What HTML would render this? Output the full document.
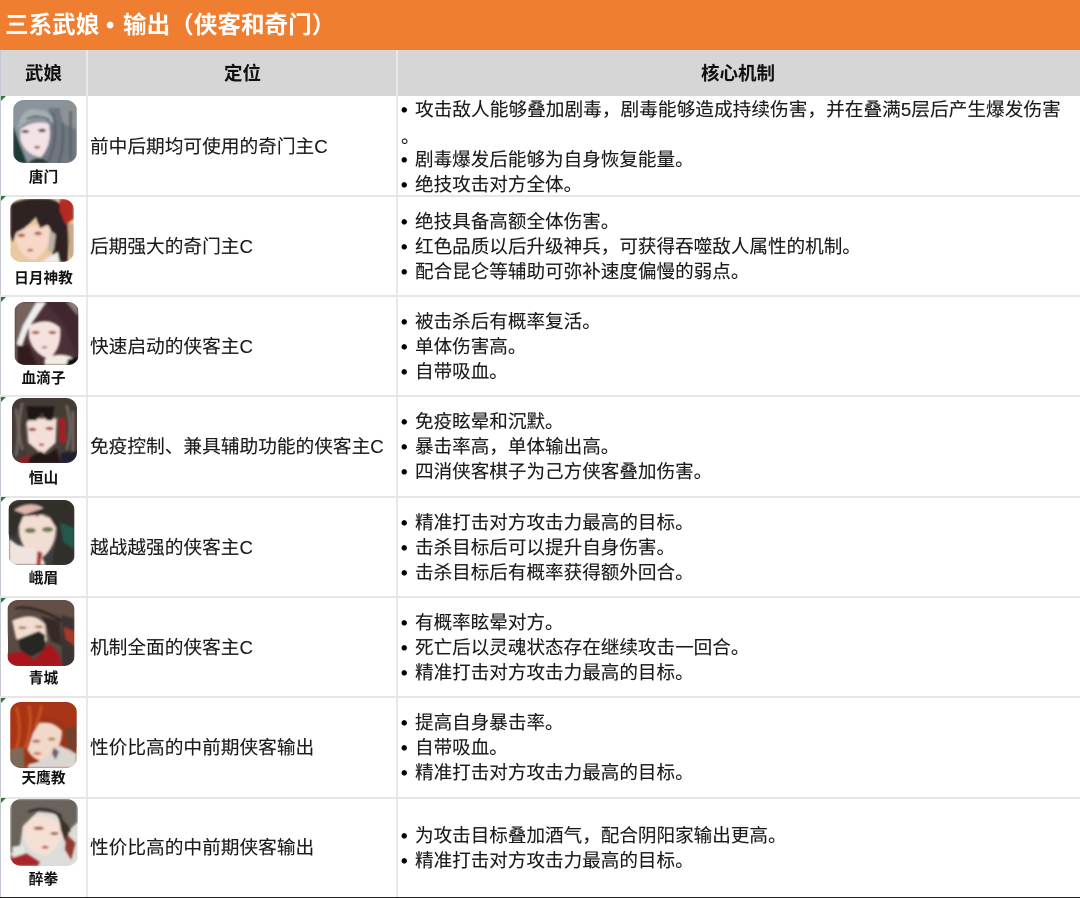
<!DOCTYPE html>
<html lang="zh"><head><meta charset="utf-8"><style>
html,body{margin:0;padding:0;background:#fff}
body{width:1080px;height:898px;position:relative;overflow:hidden;font-family:"Liberation Sans","Noto Sans CJK SC",sans-serif;color:#222}
.a{position:absolute}
.t{position:absolute;white-space:nowrap;font-size:18.7px;line-height:25px;color:#1a1a1a;text-shadow:0 0 .5px rgba(0,0,0,.45)}
.r{font-size:18.58px}
.t i{display:inline-block;width:14px;font-style:normal;font-weight:700;color:#000}
.n{position:absolute;left:0;width:87px;text-align:center;font-size:14.7px;font-weight:700;line-height:18px;color:#111;white-space:nowrap}
.h{position:absolute;top:61px;text-align:center;font-size:18.5px;font-weight:700;line-height:26px;color:#111}
.l{position:absolute;left:0;width:1080px;height:2px;background:#e6e6e6}
.v{position:absolute;top:50px;width:2px;height:847px;background:#e8e8e8}
.c{position:absolute;left:1px;width:0;height:0;border-top:5px solid #2d7d32;border-right:5px solid transparent}
svg{position:absolute;overflow:hidden;border-radius:11px}
svg path.s{fill:none;stroke-linecap:round}
.ti{position:absolute;top:10px;font-size:23.6px;line-height:32px;font-weight:700;color:#fff;white-space:nowrap}
</style></head><body>
<div class="a" style="left:0;top:0;width:1080px;height:50px;background:#ef7e30"></div>
<div class="ti" style="left:5px">三系武娘</div>
<div class="ti" style="left:106px">•</div>
<div class="ti" style="left:123px">输出（侠客和奇门）</div>
<div class="a" style="left:0;top:50px;width:1080px;height:46px;background:#d6d6d6"></div>
<div class="v" style="left:86px"></div>
<div class="v" style="left:396px"></div>
<div class="a" style="left:0;top:50px;width:1px;height:847px;background:#c4c9d4"></div>
<div class="h" style="left:0;width:87px">武娘</div>
<div class="h" style="left:88px;width:309px">定位</div>
<div class="h" style="left:398px;width:680px">核心机制</div>
<div class="l" style="top:195px"></div><div class="l" style="top:295px"></div><div class="l" style="top:395px"></div><div class="l" style="top:496px"></div><div class="l" style="top:596px"></div><div class="l" style="top:696px"></div><div class="l" style="top:797px"></div>
<div class="a" style="left:0;top:897px;width:1080px;height:1px;background:#222"></div>
<div class="c" style="top:96px"></div><div class="c" style="top:196px"></div><div class="c" style="top:297px"></div><div class="c" style="top:397px"></div><div class="c" style="top:497px"></div><div class="c" style="top:598px"></div><div class="c" style="top:698px"></div><div class="c" style="top:798px"></div>

<svg style="left:13px;top:100px" width="64" height="63" viewBox="0 0 64 64"><defs><filter id="b" x="-10%" y="-10%" width="120%" height="120%"><feGaussianBlur stdDeviation="1"/></filter></defs><rect width="64" height="64" fill="#7d868e"/><g filter="url(#b)"><path d="M0 0H64V64H0z" fill="#8b949c"/><path d="M36 8H64V64H28z" fill="#6f7780"/><path d="M46 4L64 6V30L50 24z" fill="#8e9294"/><path d="M0 26L6 44 14 64H0z" fill="#1f3a34"/><path d="M7 30Q20 20 36 24 40 44 28 58 12 56 7 40z" fill="#f3e2e6"/><path d="M4 30Q8 6 24 10 40 10 42 26L38 22 22 17 10 24z" fill="#a6aeb4"/><path d="M14 19Q24 14 36 20" class="s" stroke="#62686e" stroke-width="2"/><path d="M40 14Q46 36 36 62M50 24Q52 44 46 64M58 12V60" class="s" stroke="#59626a" stroke-width="2.5"/><path d="M14 64Q26 54 36 64z" fill="#2a3331"/><ellipse cx="12" cy="32" rx="4" ry="1.6" fill="#54464e"/><ellipse cx="29" cy="31" rx="4" ry="1.8" fill="#54464e"/><ellipse cx="24" cy="48" rx="3" ry="1.4" fill="#a8324c"/></g></svg>

<svg style="left:10px;top:199px" width="64" height="63" viewBox="0 0 64 64"><rect width="64" height="64" fill="#eac8a0"/><g filter="url(#b)"><path d="M3 32Q24 24 40 28 42 52 24 62 8 60 3 32z" fill="#f5d8c8"/><path d="M0 36V6Q10-2 40 0 58 4 60 28L58 64H42L44 38 38 26 30 30 26 18 14 30 6 34 2 44z" fill="#2d2320"/><path d="M50 0H64V20L56 26 50 12z" fill="#b52a24"/><path d="M58 24L64 26V60L60 60z" fill="#c8a888"/><path d="M40 32L46 36 44 52 38 54z" fill="#b8b4a4"/><path d="M30 64L48 54 50 64z" fill="#eeeeee"/><ellipse cx="11" cy="37" rx="4" ry="1.8" fill="#bb5a44"/><ellipse cx="28" cy="35" rx="4" ry="1.8" fill="#bb5a44"/><ellipse cx="20" cy="52" rx="3" ry="1.3" fill="#b84a50"/></g></svg>

<svg style="left:14px;top:302px" width="65" height="63" viewBox="0 0 64 64"><rect width="64" height="64" fill="#4c3038"/><g filter="url(#b)"><path d="M14 24Q34 14 46 26 48 48 34 58 18 52 14 36z" fill="#f5e2df"/><path d="M0 0H30L18 12 6 36 4 64H0z" fill="#74645c"/><path d="M22 0H32L14 26 6 48 2 42 8 24z" fill="#efeded"/><path d="M30 0H56L64 8V56L56 40 50 22 38 8z" fill="#40262f"/><path d="M52 0H64V14z" fill="#8a7c78"/><path d="M2 44L14 44 22 64H2z" fill="#331b1e"/><path d="M30 58Q44 50 58 56V64H30z" fill="#f0ece4"/><path d="M54 58L64 56V64H52z" fill="#100a0a"/><ellipse cx="21" cy="31" rx="4" ry="1.6" fill="#a04a3c"/><ellipse cx="38" cy="31" rx="4" ry="1.6" fill="#a04a3c"/><ellipse cx="30" cy="46" rx="3" ry="1.2" fill="#a86a70"/></g></svg>

<svg style="left:12px;top:398px" width="65" height="65" viewBox="0 0 64 64"><rect width="64" height="64" fill="#4a3f3a"/><g filter="url(#b)"><path d="M14 20H44L43 44 30 56 16 44z" fill="#f4dfd8"/><path d="M0 0H64V64H48L50 28 44 18H18L12 30 14 56 0 64z" fill="#453a34"/><path d="M4 12Q8 34 4 56M10 6Q4 30 10 50M54 8Q60 30 54 50M60 14V52" class="s" stroke="#716660" stroke-width="2.5"/><path d="M14 8L42 8 40 22H34L30 14 24 22H16z" fill="#1c1413"/><path d="M46 20H52L53 44 47 44z" fill="#a81e22"/><path d="M10 64L28 52 34 56 44 50 48 64z" fill="#241818"/><path d="M6 60L18 56 16 64H6z" fill="#8f1e20"/><path d="M48 54L64 52V64H48z" fill="#1c2230"/><ellipse cx="20" cy="31" rx="4" ry="1.6" fill="#9a4238"/><ellipse cx="37" cy="30" rx="4" ry="1.6" fill="#9a4238"/><ellipse cx="29" cy="46" rx="2.6" ry="1.3" fill="#b03040"/></g></svg>

<svg style="left:8px;top:500px" width="67" height="65" viewBox="0 0 64 64"><rect width="64" height="64" fill="#3f3e3a"/><g filter="url(#b)"><path d="M8 14L10 4 0 8V30z" fill="#8e8c86"/><path d="M10 18Q30 8 46 22 48 44 34 56 14 54 10 34z" fill="#f2ddd2"/><path d="M0 6Q20-4 58 0L64 8V64H42L48 30 38 14 14 16 6 36 0 34z" fill="#302d2a"/><path d="M5 10Q20 0 34 8L16 14z" fill="#e0b8ac"/><path d="M50 22L64 28V48L54 42z" fill="#245a4c"/><path d="M0 38L8 44 30 50 36 64H0z" fill="#efe4e0"/><path d="M28 50L33 52 31 64H27z" fill="#b03028"/><ellipse cx="21" cy="30" rx="5.5" ry="2.6" fill="#6e7a50"/><ellipse cx="38" cy="29" rx="5.5" ry="2.6" fill="#6e7a50"/><circle cx="28" cy="15" r="1.3" fill="#a0302a"/></g></svg>

<svg style="left:7px;top:600px" width="68" height="66" viewBox="0 0 64 64"><rect width="64" height="64" fill="#5a4a42"/><g filter="url(#b)"><path d="M4 20Q26 10 36 24L38 40 8 38z" fill="#f0ddd0"/><path d="M0 0H64V26L50 14 18 6 2 18 0 40z" fill="#635044"/><path d="M8 8Q24 4 52 20" class="s" stroke="#2e2723" stroke-width="2.5"/><path d="M10 38L30 30 36 34 36 48 20 56 12 48z" fill="#272524"/><path d="M0 52L14 50 26 58 40 42 50 54 52 64H0z" fill="#a8161e"/><path d="M32 16L50 20 52 44 42 40 36 24z" fill="#352b27"/><path d="M52 14L64 18V64H52z" fill="#3a3230"/><path d="M54 26L64 30V44L56 38z" fill="#a53a28"/><ellipse cx="14" cy="27" rx="4" ry="1.3" fill="#a07038"/><ellipse cx="30" cy="26" rx="4" ry="1.3" fill="#a07038"/></g></svg>

<svg style="left:10px;top:702px" width="67" height="66" viewBox="0 0 64 64"><rect width="64" height="64" fill="#9a3418"/><g filter="url(#b)"><path d="M18 24Q38 14 50 28 50 48 32 58 14 54 16 36z" fill="#f1d8c8"/><path d="M0 0H64V30L56 30 48 18 32 14 22 30 14 54 0 64z" fill="#a83412"/><path d="M6 6Q12 30 4 50M18 4Q22 24 14 44M30 4Q28 14 24 24" class="s" stroke="#c9521f" stroke-width="2.5"/><path d="M52 26L64 22V44L56 50z" fill="#74402c"/><path d="M0 46L12 44 14 64H0z" fill="#7b6a5a"/><path d="M18 60Q34 58 48 42L64 50V64H16z" fill="#dcd6d2"/><ellipse cx="40" cy="36" rx="3.5" ry="1.6" fill="#c08030"/><ellipse cx="25" cy="38" rx="4" ry="1.4" fill="#b45a3c"/><ellipse cx="26" cy="50" rx="4" ry="1.5" fill="#d8705c"/><path d="M42 44L47 48 44 56 40 50z" fill="#6a6070"/></g></svg>

<svg style="left:10px;top:799px" width="68" height="67" viewBox="0 0 64 64"><rect width="64" height="64" fill="#dcdcd8"/><g filter="url(#b)"><path d="M12 20Q34 10 50 26 48 48 34 54 16 52 12 34z" fill="#f5e0d6"/><path d="M0 0H64V22L56 30 46 14 26 12 12 26 8 50 0 52z" fill="#6a645c"/><path d="M18 12Q34 6 48 16M46 16L56 30" class="s" stroke="#2e2823" stroke-width="2.5"/><path d="M46 16L56 26 54 44 48 30z" fill="#3a3028"/><path d="M54 34L62 42 58 58 52 48z" fill="#8e3a30"/><path d="M0 54L12 50 28 60 26 64H0z" fill="#a8262a"/><path d="M2 46L12 44 14 52 2 56z" fill="#e4e6e0"/><ellipse cx="27" cy="28" rx="5" ry="1.6" fill="#9a6048"/><ellipse cx="42" cy="33" rx="4" ry="1.5" fill="#9a6048"/><ellipse cx="33" cy="46" rx="3.4" ry="1.4" fill="#c0504a"/></g></svg>

<div class="n" style="top:169px">唐门</div>
<div class="n" style="top:270px">日月神教</div>
<div class="n" style="top:370px">血滴子</div>
<div class="n" style="top:470px">恒山</div>
<div class="n" style="top:570px">峨眉</div>
<div class="n" style="top:670px">青城</div>
<div class="n" style="top:770px">天鹰教</div>
<div class="n" style="top:871px">醉拳</div>

<div class="t" style="left:90px;top:134px">前中后期均可使用的奇门主C</div>
<div class="t" style="left:90px;top:234px">后期强大的奇门主C</div>
<div class="t" style="left:90px;top:334px">快速启动的侠客主C</div>
<div class="t" style="left:90px;top:434px">免疫控制、兼具辅助功能的侠客主C</div>
<div class="t" style="left:90px;top:535px">越战越强的侠客主C</div>
<div class="t" style="left:90px;top:635px">机制全面的侠客主C</div>
<div class="t" style="left:90px;top:735px">性价比高的中前期侠客输出</div>
<div class="t" style="left:90px;top:835px">性价比高的中前期侠客输出</div>

<div class="t" style="left:401px;top:97px"><i>•</i>攻击敌人能够叠加剧毒，剧毒能够造成持续伤害，并在叠满5层后产生爆发伤害</div>
<div class="t" style="left:401px;top:124px">。</div>
<div class="t r" style="left:401px;top:147px"><i>•</i>剧毒爆发后能够为自身恢复能量。</div>
<div class="t r" style="left:401px;top:172px"><i>•</i>绝技攻击对方全体。</div>
<div class="t r" style="left:401px;top:209px"><i>•</i>绝技具备高额全体伤害。</div>
<div class="t r" style="left:401px;top:234px"><i>•</i>红色品质以后升级神兵，可获得吞噬敌人属性的机制。</div>
<div class="t r" style="left:401px;top:259px"><i>•</i>配合昆仑等辅助可弥补速度偏慢的弱点。</div>
<div class="t r" style="left:401px;top:309px"><i>•</i>被击杀后有概率复活。</div>
<div class="t r" style="left:401px;top:334px"><i>•</i>单体伤害高。</div>
<div class="t r" style="left:401px;top:359px"><i>•</i>自带吸血。</div>
<div class="t r" style="left:401px;top:409px"><i>•</i>免疫眩晕和沉默。</div>
<div class="t r" style="left:401px;top:434px"><i>•</i>暴击率高，单体输出高。</div>
<div class="t r" style="left:401px;top:459px"><i>•</i>四消侠客棋子为己方侠客叠加伤害。</div>
<div class="t r" style="left:401px;top:510px"><i>•</i>精准打击对方攻击力最高的目标。</div>
<div class="t r" style="left:401px;top:535px"><i>•</i>击杀目标后可以提升自身伤害。</div>
<div class="t r" style="left:401px;top:560px"><i>•</i>击杀目标后有概率获得额外回合。</div>
<div class="t r" style="left:401px;top:610px"><i>•</i>有概率眩晕对方。</div>
<div class="t r" style="left:401px;top:635px"><i>•</i>死亡后以灵魂状态存在继续攻击一回合。</div>
<div class="t r" style="left:401px;top:660px"><i>•</i>精准打击对方攻击力最高的目标。</div>
<div class="t r" style="left:401px;top:710px"><i>•</i>提高自身暴击率。</div>
<div class="t r" style="left:401px;top:735px"><i>•</i>自带吸血。</div>
<div class="t r" style="left:401px;top:760px"><i>•</i>精准打击对方攻击力最高的目标。</div>
<div class="t r" style="left:401px;top:823px"><i>•</i>为攻击目标叠加酒气，配合阴阳家输出更高。</div>
<div class="t r" style="left:401px;top:848px"><i>•</i>精准打击对方攻击力最高的目标。</div>
</body></html>
